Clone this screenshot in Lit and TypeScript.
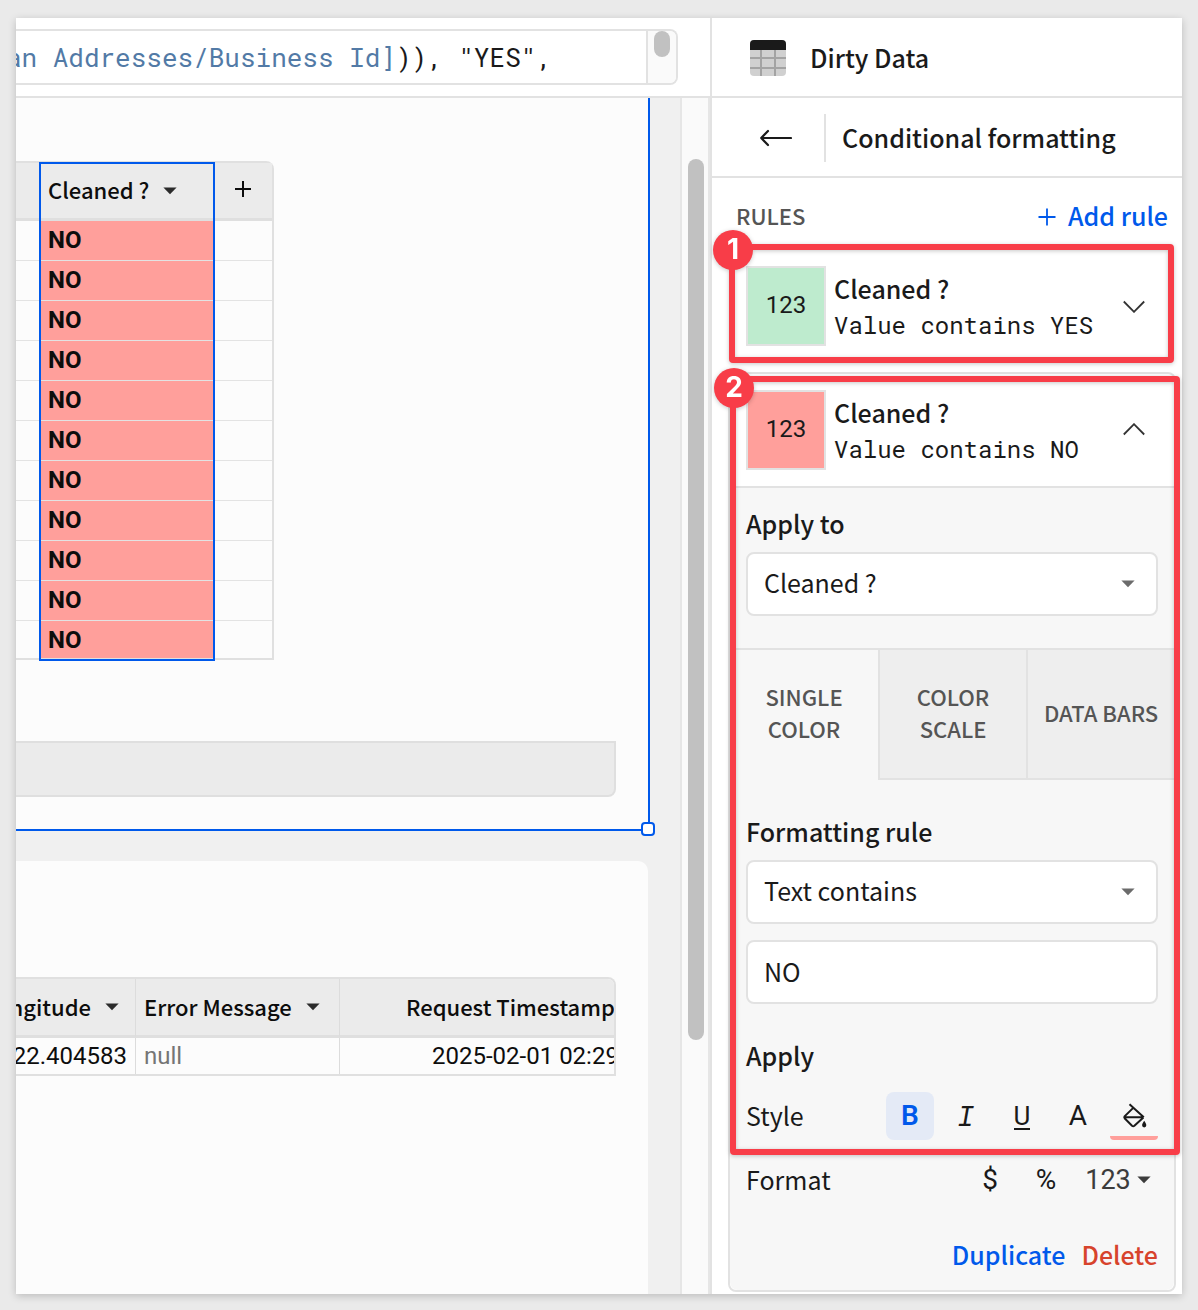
import { LitElement, html, css, svg } from "lit";
import { customElement, property, state } from "lit/decorators.js";

const caret = html`<svg class="caret" viewBox="0 0 14 8" width="14" height="8" aria-hidden="true">
  <path d="M0.4 0.5h13.2L7 7.3z" fill="currentColor" />
</svg>`;

const caretStyles = css`
  .caret {
    flex: none;
    display: block;
  }
`;

/** Numbered outline that calls out a region of its parent. */
@customElement("callout-frame")
export class CalloutFrame extends LitElement {
  @property() label = "";

  static styles = css`
    :host {
      position: absolute;
      z-index: 2;
      border: 6px solid #f83d48;
      border-radius: 4px;
      filter: drop-shadow(0 1px 2px rgba(0, 0, 0, 0.22));
      pointer-events: none;
    }
    .badge {
      position: absolute;
      top: var(--badge-top, -20px);
      left: -22px;
      width: 40px;
      height: 40px;
      border-radius: 50%;
      background: #f83d48;
      color: #fff;
      font: 700 28px/38px Inter, sans-serif;
      text-align: center;
    }
  `;

  render() {
    return html`<span class="badge">${this.label}</span>`;
  }
}

/** Summary line of one formatting rule: swatch, name, condition, toggle. */
@customElement("rule-summary")
export class RuleSummary extends LitElement {
  @property() name = "";
  @property() condition = "";
  @property() color = "";
  @property({ type: Boolean }) open = false;

  static styles = css`
    :host {
      display: flex;
      align-items: center;
      gap: 8px;
      padding: 16px;
      background: #fff;
    }
    .swatch {
      box-sizing: border-box;
      flex: none;
      width: 80px;
      height: 80px;
      border: 2px solid #e2e2e2;
      font: 400 24px/74px Roboto, sans-serif;
      text-align: center;
    }
    .text {
      flex: 1;
      min-width: 0;
    }
    .name {
      font-weight: 500;
      line-height: 38px;
    }
    .condition {
      font: 400 24px/36px "Roboto Mono", "DejaVu Sans Mono", monospace;
      white-space: nowrap;
    }
    .toggle {
      display: grid;
      place-items: center;
      flex: none;
      width: 48px;
      height: 48px;
      margin-left: -16px;
      padding: 0;
      border: 0;
      background: none;
      color: #333;
    }
  `;

  render() {
    return html`
      <div class="swatch" style="background:${this.color}">123</div>
      <div class="text">
        <div class="name">${this.name}</div>
        <div class="condition">${this.condition}</div>
      </div>
      <button class="toggle" aria-label="Toggle rule" aria-expanded=${this.open}>
        <svg width="24" height="14" viewBox="0 0 24 14" fill="none" stroke="currentColor" stroke-width="1.8">
          ${this.open ? svg`<path d="M1.8 11.5 12 1.2l10.2 10.3" />` : svg`<path d="M1.8 2.5 12 12.8l10.2-10.3" />`}
        </svg>
      </button>
    `;
  }
}

/** Expanded rule settings. */
@customElement("rule-editor")
export class RuleEditor extends LitElement {
  @state() private tab = 0;
  @state() private bold = true;

  private tabs = ["SINGLE COLOR", "COLOR SCALE", "DATA BARS"];

  static styles = [
    caretStyles,
    css`
      :host {
        display: block;
        border-top: 2px solid #e2e2e2;
        border-radius: 0 0 8px 8px;
        background: #f7f7f7;
      }
      .section {
        display: flex;
        flex-direction: column;
        padding: 16px 16px 32px;
      }
      .section.rule {
        padding-top: 32px;
        padding-bottom: 16px;
      }
      .label {
        margin-bottom: 10px;
        font-weight: 500;
        line-height: 38px;
      }
      .field {
        display: grid;
        grid-template-columns: 1fr 14px;
        align-items: center;
      }
      .field .caret {
        grid-area: 1 / 2;
        justify-self: end;
        margin-right: 23px;
        color: #6b6b6b;
        pointer-events: none;
      }
      select,
      input {
        grid-area: 1 / 1 / 2 / 3;
        box-sizing: border-box;
        width: 100%;
        height: 64px;
        margin: 0;
        padding: 0 40px 4px 16px;
        border: 2px solid #e2e2e2;
        border-radius: 8px;
        background: #fff;
        color: inherit;
        font: inherit;
        appearance: none;
      }
      input {
        margin-top: 16px;
        padding-bottom: 2px;
      }
      .tabs {
        display: grid;
        grid-template-columns: repeat(3, 1fr);
        height: 132px;
      }
      .tab {
        padding: 0 12px 4px;
        border: 0 solid #e2e2e2;
        border-width: 2px 0 2px 2px;
        background: #eee;
        color: #555;
        font: inherit;
        font-size: 22px;
        font-weight: 500;
        line-height: 32px;
      }
      .tab:first-child {
        border-left-width: 0;
      }
      .tab.active {
        border-bottom-color: transparent;
        background: #f7f7f7;
      }
      .label.apply {
        margin: 32px 0 18px;
      }
      .row {
        display: flex;
        align-items: center;
        gap: 8px;
        height: 48px;
        margin-bottom: 16px;
      }
      .row .title {
        flex: 1;
        padding-bottom: 2px;
      }
      .tool {
        box-sizing: border-box;
        display: flex;
        align-items: center;
        justify-content: center;
        width: 48px;
        height: 48px;
        padding: 0;
        border: 0;
        border-radius: 8px;
        background: none;
        color: #1a1a1a;
        font: 400 28px/40px Roboto, sans-serif;
      }
      .tool.on {
        background: #e4eaf6;
        color: #0059eb;
      }
      .bold {
        font-weight: 600;
      }
      .italic {
        font: italic 400 28px/40px "Roboto Mono", "Liberation Mono", monospace;
      }
      .underlined {
        padding-top: 2px;
        border-bottom: 2px solid currentColor;
        font-size: 26px;
        line-height: 24px;
      }
      .tool.fill {
        padding: 3px 0 0 2px;
        border-bottom: 4px solid #ff9f9b;
        border-radius: 4px;
      }
      .tool.number {
        gap: 6px;
        width: 80px;
        color: #3c3c3c;
        font-size: 27px;
      }
      .actions {
        display: flex;
        justify-content: flex-end;
        gap: 16px;
        margin-top: 14px;
      }
      .action {
        padding: 0;
        border: 0;
        background: none;
        color: #0059eb;
        font: inherit;
        font-weight: 500;
        line-height: 40px;
      }
      .action.danger {
        color: #d7432c;
      }
    `,
  ];

  render() {
    return html`
      <div class="section">
        <label class="label" for="target">Apply to</label>
        <div class="field">
          <select id="target"><option>Cleaned ?</option></select>
          ${caret}
        </div>
      </div>
      <div class="tabs" role="tablist">
        ${this.tabs.map(
          (name, i) => html`<button
            class="tab ${i === this.tab ? "active" : ""}"
            role="tab"
            aria-selected=${i === this.tab}
            @click=${() => (this.tab = i)}
          >${name}</button>`
        )}
      </div>
      <div class="section rule">
        <label class="label" for="operator">Formatting rule</label>
        <div class="field">
          <select id="operator"><option>Text contains</option></select>
          ${caret}
        </div>
        <input type="text" aria-label="Value" .value=${"NO"} />
        <div class="label apply">Apply</div>
        <div class="row">
          <span class="title">Style</span>
          <button
            class="tool ${this.bold ? "on" : ""}"
            aria-label="Bold"
            aria-pressed=${this.bold}
            @click=${() => (this.bold = !this.bold)}
          ><span class="bold">B</span></button>
          <button class="tool" aria-label="Italic"><span class="italic">I</span></button>
          <button class="tool" aria-label="Underline"><span class="underlined">U</span></button>
          <button class="tool" aria-label="Text color">A</button>
          <button class="tool fill" aria-label="Fill color">
            <svg width="26" height="26" viewBox="0 0 26 26" fill="none" stroke="#1a1a1a" stroke-width="2">
              <path d="M7.5 1.2 21.8 14.2M11.5 4.6 2.6 13.4Q1.9 14.4 2.6 15.2L10 22.8Q11.2 23.8 12.4 22.8L21.4 14.4M2.4 14.3H21" />
              <path d="M22.2 17.8C23.4 19.6 24.3 20.9 24.3 22.3a2.1 2.1 0 0 1-4.2 0C20.1 20.9 21 19.6 22.2 17.8z" fill="#1a1a1a" stroke="none" />
            </svg>
          </button>
        </div>
        <div class="row">
          <span class="title">Format</span>
          <button class="tool" aria-label="Currency">$</button>
          <button class="tool" aria-label="Percent">%</button>
          <button class="tool number" aria-label="Number format">123 ${caret}</button>
        </div>
        <div class="actions">
          <button class="action">Duplicate</button>
          <button class="action danger">Delete</button>
        </div>
      </div>
    `;
  }
}

/** Right-hand panel. */
@customElement("format-panel")
export class FormatPanel extends LitElement {
  static styles = css`
    :host {
      display: block;
      padding-bottom: 2px;
      border-left: 2px solid #e2e2e2;
      background: #fff;
    }
    .bar {
      box-sizing: border-box;
      display: flex;
      align-items: center;
      height: 80px;
      padding-top: 2px;
      border-bottom: 2px solid #e2e2e2;
      font-weight: 500;
    }
    .source {
      gap: 24px;
      padding-left: 38px;
    }
    .back {
      display: grid;
      place-items: center;
      width: 48px;
      height: 48px;
      margin: 0 24px 0 40px;
      padding: 0;
      border: 0;
      background: none;
    }
    h1,
    h2,
    h3 {
      margin: 0;
      font: inherit;
    }
    .bar h1,
    .bar h2 {
      padding-bottom: 2px;
      line-height: 46px;
    }
    .bar h2 {
      flex: 1;
      padding-left: 16px;
      border-left: 2px solid #e2e2e2;
    }
    .rules {
      display: flex;
      align-items: center;
      justify-content: space-between;
      padding: 17px 14px 13px 24px;
      line-height: 40px;
    }
    .rules h3 {
      color: #555;
      font-size: 22px;
      font-weight: 500;
      line-height: 40px;
    }
    .add {
      display: flex;
      align-items: center;
      gap: 12px;
      padding: 0;
      border: 0;
      background: none;
      color: #0059eb;
      font: inherit;
      font-weight: 500;
      line-height: 40px;
    }
    .add svg {
      margin-top: 4px;
    }
    .card {
      position: relative;
      margin: 0 6px 0 16px;
      border: 2px solid #e2e2e2;
      border-radius: 8px;
    }
    .card.plain {
      margin-bottom: 8px;
      border-color: transparent;
    }
    .card rule-summary {
      border-radius: 8px;
    }
    .first {
      inset: -6px 0 -1px -1px;
    }
    .second {
      --badge-top: -14px;
      inset: 2px -6px 135px 0;
    }
  `;

  render() {
    return html`
      <div class="bar source">
        <svg width="36" height="36" viewBox="0 0 36 36" aria-hidden="true">
          <rect width="36" height="36" rx="4" fill="#d0d0d0" />
          <path d="M0 18h36M0 28h36M11 10v26M25 10v26" stroke="#a3a3a3" stroke-width="2" />
          <path d="M0 10V4a4 4 0 0 1 4-4h28a4 4 0 0 1 4 4v6z" fill="#1a1a1a" />
        </svg>
        <h1>Dirty Data</h1>
      </div>
      <div class="bar">
        <button class="back" aria-label="Back">
          <svg width="32" height="18" viewBox="0 0 32 18" fill="none" stroke="#1a1a1a" stroke-width="2.2" stroke-linecap="round" stroke-linejoin="round">
            <path d="M8 2 1.2 9 8 16M1.2 9H31" />
          </svg>
        </button>
        <h2>Conditional formatting</h2>
      </div>
      <div class="rules">
        <h3>RULES</h3>
        <button class="add">
          <svg width="18" height="18" viewBox="0 0 18 18" stroke="currentColor" stroke-width="1.8"><path d="M9 0.5v17M0.5 9h17" /></svg>
          Add rule
        </button>
      </div>
      <div class="card plain">
        <rule-summary name="Cleaned ?" condition="Value contains YES" color="#beebce"></rule-summary>
        <callout-frame class="first" label="1"></callout-frame>
      </div>
      <div class="card">
        <rule-summary name="Cleaned ?" condition="Value contains NO" color="#ff9f9b" open></rule-summary>
        <rule-editor></rule-editor>
        <callout-frame class="second" label="2"></callout-frame>
      </div>
    `;
  }
}

/** Formula bar and the canvas with its two tables. */
@customElement("data-canvas")
export class DataCanvas extends LitElement {
  private rows: string[] = Array(11).fill("NO");

  static styles = [
    caretStyles,
    css`
      :host {
        display: flex;
        flex-direction: column;
        min-width: 0;
      }
      .topbar {
        padding: 11px 32px 11px 0;
        border-bottom: 2px solid #e2e2e2;
        background: #fff;
      }
      .formula {
        display: flex;
        height: 52px;
        border: solid #e2e2e2;
        border-width: 2px 2px 2px 0;
        border-radius: 0 8px 8px 0;
        overflow: hidden;
      }
      .code {
        flex: 1;
        display: flex;
        justify-content: flex-end;
        min-width: 0;
        padding-right: 94px;
        overflow: hidden;
        font: 400 26px/52px "Roboto Mono", "DejaVu Sans Mono", monospace;
        white-space: pre;
      }
      .ref {
        color: #527aa6;
      }
      .mini {
        box-sizing: border-box;
        width: 30px;
        padding-left: 6px;
        border-left: 2px solid #e2e2e2;
        background: #fafafa;
      }
      .thumb {
        width: 16px;
        border-radius: 8px;
        background: #c1c1c1;
      }
      .mini .thumb {
        height: 26px;
      }
      .body {
        flex: 1;
        display: flex;
        min-height: 0;
      }
      .canvas {
        flex: 1;
        display: flex;
        flex-direction: column;
        gap: 30px;
        min-width: 0;
        padding-right: 30px;
        background: #f0f0f0;
      }
      .track {
        box-sizing: border-box;
        display: flex;
        width: 30px;
        padding: 61px 0 254px 6px;
        border: 2px solid #e6e6e6;
        border-width: 0 2px;
        background: #fafafa;
      }
      .element {
        position: relative;
        background: #fcfcfc;
      }
      .element.selected {
        padding: 63px 32px 32px 0;
        border: solid #0059eb;
        border-width: 0 2px 2px 0;
      }
      .handle {
        box-sizing: border-box;
        position: absolute;
        right: -7px;
        bottom: -7px;
        width: 14px;
        height: 14px;
        border: 2px solid #0059eb;
        border-radius: 4px;
        background: #fff;
      }
      .element.results {
        flex: 1;
        margin-right: 2px;
        padding: 116px 32px 0 0;
        border-radius: 0 10px 0 0;
      }
      table {
        width: 100%;
        border-spacing: 0;
        table-layout: fixed;
      }
      th,
      td {
        box-sizing: border-box;
        padding: 0 8px;
        text-align: left;
        white-space: nowrap;
      }
      th {
        height: 58px;
        padding-bottom: 3px;
        border-bottom: 3px solid #dfdfdf;
        background: #ebebeb;
        color: #0d0d0d;
        font-size: 22px;
        font-weight: 500;
      }
      .head {
        display: flex;
        align-items: center;
        gap: 14px;
      }
      .head .caret {
        margin-top: 3px;
        color: #2b2b2b;
      }
      .frame {
        position: relative;
        border: solid #e0e0e0;
        border-width: 2px 2px 2px 0;
        border-radius: 0 8px 0 0;
      }
      .cleaned {
        width: 256px;
      }
      .cleaned td {
        height: 40px;
        padding-bottom: 2px;
        border-bottom: 1px solid #e3e3e3;
        font: 700 24px/32px Roboto, sans-serif;
        color: #0d0d0d;
      }
      .cleaned tr:last-child td {
        height: 37px;
        padding-bottom: 0;
        border-bottom: 0;
      }
      .cleaned td.value {
        background: #ff9f9b;
      }
      .cleaned .row-col {
        width: 24px;
      }
      .cleaned .value-col {
        width: 174px;
      }
      .selection {
        position: absolute;
        top: -1px;
        bottom: -3px;
        left: 23px;
        width: 172px;
        border: 2px solid #0059eb;
        pointer-events: none;
      }
      .plus {
        display: block;
        padding: 0;
        margin: 0 auto;
        border: 0;
        background: none;
      }
      .footer {
        height: 52px;
        margin-top: 81px;
        border: solid #dfdfdf;
        border-width: 2px 2px 2px 0;
        border-radius: 0 0 8px 0;
        background: #ebebeb;
      }
      .results .frame {
        overflow: hidden;
      }
      .results th + th,
      .results td + td {
        border-left: 1px solid #dcdcdc;
      }
      .results th {
        height: 59px;
      }
      .results td {
        height: 36px;
        font: 400 24px/36px Roboto, sans-serif;
        color: #0d0d0d;
      }
      .results td.empty {
        color: #757575;
      }
      .end .head,
      .results td.end {
        display: flex;
        justify-content: flex-end;
      }
      .results th.end {
        padding-right: 16px;
      }
      .long-col {
        width: 119px;
      }
      .message-col {
        width: 204px;
      }
      .results th.time {
        padding-left: 66px;
      }
      .results td.time {
        padding-left: 92px;
      }
    `,
  ];

  render() {
    return html`
      <div class="topbar">
        <div class="formula">
          <div class="code" role="textbox" aria-label="Formula" tabindex="0"><span class="ref">an Addresses/Business Id]</span><span>)), "YES",</span></div>
          <div class="mini"><div class="thumb"></div></div>
        </div>
      </div>
      <div class="body">
        <div class="canvas">
          <section class="element selected">
            <div class="frame cleaned">
              <table>
                <colgroup><col class="row-col" /><col class="value-col" /><col /></colgroup>
                <thead>
                  <tr>
                    <th></th>
                    <th><div class="head">Cleaned ? ${caret}</div></th>
                    <th>
                      <button class="plus" aria-label="Add column">
                        <svg width="16" height="16" viewBox="0 0 16 16" stroke="#0d0d0d" stroke-width="2" display="block"><path d="M8 0v16M0 8h16" /></svg>
                      </button>
                    </th>
                  </tr>
                </thead>
                <tbody>
                  ${this.rows.map((v) => html`<tr><td></td><td class="value">${v}</td><td></td></tr>`)}
                </tbody>
              </table>
              <div class="selection"></div>
            </div>
            <div class="footer"></div>
            <span class="handle"></span>
          </section>
          <section class="element results">
            <div class="frame">
              <table>
                <colgroup><col class="long-col" /><col class="message-col" /><col /></colgroup>
                <thead>
                  <tr>
                    <th class="end"><div class="head">ngitude ${caret}</div></th>
                    <th><div class="head">Error Message ${caret}</div></th>
                    <th class="time">Request Timestamp</th>
                  </tr>
                </thead>
                <tbody>
                  <tr>
                    <td class="end">22.404583</td>
                    <td class="empty">null</td>
                    <td class="time">2025-02-01 02:29</td>
                  </tr>
                </tbody>
              </table>
            </div>
          </section>
        </div>
        <div class="track"><div class="thumb"></div></div>
      </div>
    `;
  }
}

@customElement("app-root")
export class AppRoot extends LitElement {
  static styles = css`
    :host {
      display: block;
      padding: 18px 16px 16px;
      background: #eaeaea;
      color: #1a1a1a;
      font: 400 25px/40px "Noto Sans CJK SC", "Noto Sans", sans-serif;
    }
    .window {
      display: grid;
      grid-template-columns: minmax(0, 1fr) 472px;
      background: #fff;
      box-shadow: 0 2px 8px rgba(0, 0, 0, 0.2);
    }
  `;

  render() {
    return html`<main class="window">
      <data-canvas></data-canvas>
      <format-panel></format-panel>
    </main>`;
  }
}
